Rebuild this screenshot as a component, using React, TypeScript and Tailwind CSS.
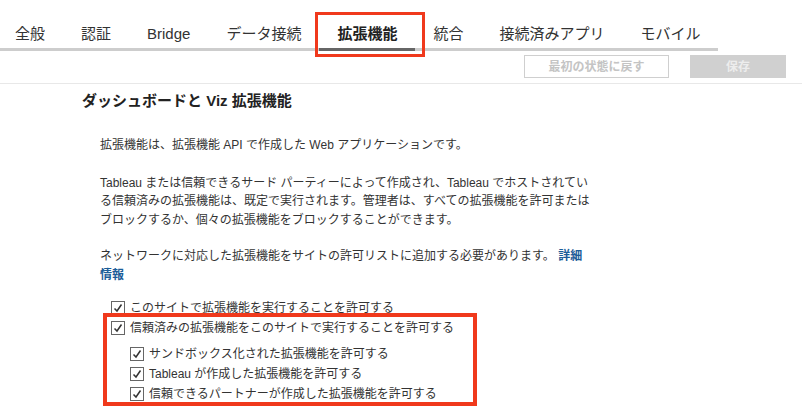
import React from 'react';

const TABS = ['全般', '認証', 'Bridge', 'データ接続', '拡張機能', '統合', '接続済みアプリ', 'モバイル'];
const ACTIVE = '拡張機能';

const Check = () => (
  <svg width="14" height="14" viewBox="0 0 14 14" className="shrink-0">
    <rect x="0.5" y="0.5" width="13" height="13" fill="#fff" stroke="#666" />
    <path d="M3.5 7.5 L6 10 L10.5 3.5" fill="none" stroke="#333" strokeWidth="1.5" />
  </svg>
);

const Row = ({ label, sub }: { label: string; sub?: boolean }) => (
  <div className={`flex items-center h-[20px] gap-[5px] ${sub ? 'pl-[48px]' : 'pl-[29px]'}`}>
    <Check />
    <span>{label}</span>
  </div>
);

export default function App() {
  return (
    <div
      className="relative w-[802px] h-[416px] overflow-hidden bg-white text-[#333]"
      style={{ fontFamily: '"Liberation Sans", "Noto Sans CJK JP", sans-serif' }}
    >
      {/* tabs */}
      <div className="flex">
        <div className="flex border-b-[3px] border-[#cdcdcd]">
          {TABS.map((t, i) => (
            <div
              key={t}
              className={`pt-[24px] pb-[4px] text-[15px] leading-[20px] ${i === 0 ? 'pl-[15px] pr-[18px]' : 'px-[18px]'} ${
                t === ACTIVE ? 'font-bold text-[#222] border-b-[3px] border-[#666] -mb-[3px]' : 'text-[#333]'
              }`}
            >
              {t}
            </div>
          ))}
        </div>
      </div>

      {/* toolbar */}
      <div className="flex justify-end gap-[21px] pr-[16px] pt-[4px] pb-[5px] border-b border-[#e8e8e8]">
        <button className="w-[145px] h-[23px] border border-[#cfcfcf] bg-white text-[12px] font-bold text-[#c4c4c4]">
          最初の状態に戻す
        </button>
        <button className="w-[96px] h-[23px] bg-[#d0d0d0] text-[12px] font-bold text-[#ededed]">保存</button>
      </div>

      {/* content */}
      <div className="pl-[82px] pt-[7px]">
        <h2 className="text-[15px] leading-[20px] font-bold text-[#222]">ダッシュボードと Viz 拡張機能</h2>

        <div className="pl-[18px] pt-[25px] text-[12px] leading-[18.5px] w-[520px]">
          <p>拡張機能は、拡張機能 API で作成した Web アプリケーションです。</p>
          <p className="mt-[19px]">
            Tableau または信頼できるサード パーティーによって作成され、Tableau でホストされてい
            <br />
            る信頼済みの拡張機能は、既定で実行されます。管理者は、すべての拡張機能を許可または
            <br />
            ブロックするか、個々の拡張機能をブロックすることができます。
          </p>
          <p className="mt-[18px]">
            ネットワークに対応した拡張機能をサイトの許可リストに追加する必要があります。{' '}
            <span className="font-bold text-[#1b5c98]">
              詳細
              <br />
              情報
            </span>
          </p>
        </div>

        <div className="pt-[14px] text-[12px]">
          <Row label="このサイトで拡張機能を実行することを許可する" />
          <Row label="信頼済みの拡張機能をこのサイトで実行することを許可する" />
          <div className="h-[6px]" />
          <Row sub label="サンドボックス化された拡張機能を許可する" />
          <Row sub label="Tableau が作成した拡張機能を許可する" />
          <Row sub label="信頼できるパートナーが作成した拡張機能を許可する" />
        </div>
      </div>

      {/* annotation boxes */}
      <div className="absolute left-[315px] top-[12px] w-[110px] h-[45px] border-[3px] border-[#f0391c] pointer-events-none" />
      <div className="absolute left-[103px] top-[313px] w-[374px] h-[93px] border-[4px] border-[#f0391c] pointer-events-none" />
    </div>
  );
}
